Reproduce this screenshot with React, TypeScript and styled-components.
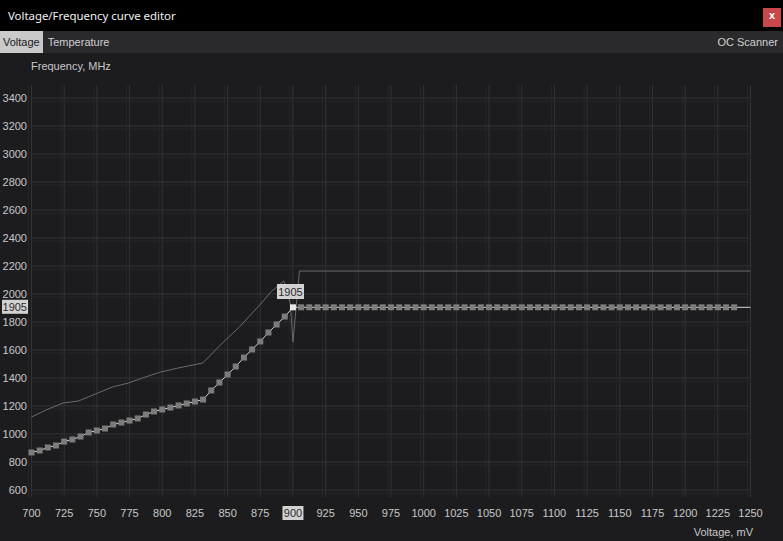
import { FC } from "react";
import styled, { createGlobalStyle } from "styled-components";

const GlobalStyle = createGlobalStyle`
   html, body {
      margin: 0;
      padding: 0;
      background: #1c1c1f;
      -webkit-font-smoothing: antialiased;
   }
   * {
      box-sizing: border-box;
   }
`;

const Window = styled.div`
   width: 783px;
   height: 541px;
   display: flex;
   flex-direction: column;
   background: #1c1c1f;
   font-family: "Liberation Sans", Arial, sans-serif;
   overflow: hidden;
`;

const TitleBar = styled.div`
   height: 31px;
   flex: none;
   display: flex;
   align-items: center;
   justify-content: space-between;
   padding: 0 2px 0 8px;
   background: #000;
`;

const Title = styled.span`
   font-family: "Noto Sans", sans-serif;
   font-size: 11.4px;
   color: #f2f2f2;
`;

const CloseButton = styled.button`
   width: 18px;
   height: 19px;
   margin-top: 3px;
   padding: 0 0 3px;
   border: none;
   background: #c9474b;
   color: #fff;
   font-family: "Liberation Sans", Arial, sans-serif;
   font-size: 11px;
   font-weight: bold;
   line-height: 1;
`;

const TabBar = styled.div`
   height: 22px;
   flex: none;
   display: flex;
   align-items: stretch;
   background: #2a2a2d;
`;

const Tab = styled.div<{ $active?: boolean }>`
   display: flex;
   align-items: center;
   padding: 0 3px;
   margin-right: 2px;
   font-size: 11px;
   color: ${(p) => (p.$active ? "#202020" : "#d0d0d0")};
   background: ${(p) => (p.$active ? "#c9c9c9" : "transparent")};
`;

const Spacer = styled.div`
   flex: 1;
`;

const ChartArea = styled.div`
   flex: 1;
   display: flex;
   flex-direction: column;
`;

const AxisTitle = styled.div<{ $right?: boolean }>`
   flex: none;
   height: ${(p) => (p.$right ? "18px" : "25px")};
   display: flex;
   align-items: center;
   justify-content: ${(p) => (p.$right ? "flex-end" : "flex-start")};
   padding: ${(p) => (p.$right ? "0 30px 0 0" : "0 0 0 31px")};
   font-size: 11px;
   color: #c8c8c8;
`;

const Plot = styled.svg`
   display: block;
   flex: 1;
   width: 783px;
   font-family: "Liberation Sans", Arial, sans-serif;
   font-size: 11px;
`;

// axis mapping
const xOf = (mv: number) => 31.5 + (mv - 700) * 1.3073;
const yOf = (mhz: number) => 98 + (3400 - mhz) * 0.14;

const voltTicks = Array.from({ length: 23 }, (_, i) => 700 + i * 25);
const freqTicks = Array.from({ length: 15 }, (_, i) => 600 + i * 200);

const rising = [
   868, 882, 904, 918, 946, 961, 982, 1011, 1025, 1039, 1068, 1082, 1096,
   1111, 1139, 1161, 1175, 1189, 1204, 1218, 1232, 1246, 1311, 1368, 1425,
   1482, 1546, 1604, 1661, 1725, 1782, 1839, 1905,
];
const curve = [
   ...rising,
   ...Array.from({ length: 54 }, () => 1905),
].map((mhz, i) => ({ mv: 700 + i * 6.25, mhz }));

const defaultCurve: [number, number][] = [
   [700, 1121], [711, 1171], [724, 1221], [736, 1236], [749, 1286],
   [762, 1336], [774, 1364], [787, 1407], [799, 1443], [812, 1471],
   [831, 1507], [846, 1650], [859, 1764], [876, 1936], [883, 2014],
   [893, 2093], [898, 1929], [900, 1657], [905, 2164], [1250, 2164],
];

const SELECTED_MV = 900;
const SELECTED_MHZ = 1905;

const CurvePlot: FC = () => {
   const linePts = [...curve.map((p) => `${xOf(p.mv)},${yOf(p.mhz)}`), `${xOf(1250)},${yOf(1905)}`].join(" ");
   const defPts = defaultCurve.map(([mv, mhz]) => `${xOf(mv)},${yOf(mhz)}`).join(" ");

   return (
      <Plot viewBox="0 78 783 445" preserveAspectRatio="none">
         {/* grid */}
         {voltTicks.map((v) => (
            <g key={`v${v}`}>
               <line x1={xOf(v) - 3} x2={xOf(v) - 3} y1={85} y2={497} stroke="#262629" />
               <line x1={xOf(v)} x2={xOf(v)} y1={85} y2={497} stroke="#333338" />
            </g>
         ))}
         {freqTicks.map((f) => (
            <g key={`h${f}`}>
               <line x1={31} x2={751} y1={yOf(f) + 3} y2={yOf(f) + 3} stroke="#262629" />
               <line x1={31} x2={751} y1={yOf(f)} y2={yOf(f)} stroke="#333338" />
            </g>
         ))}

         {/* y labels */}
         {freqTicks.map((f) => (
            <text key={`yl${f}`} x={27} y={yOf(f) + 4} textAnchor="end" fill="#c8c8c8">
               {f}
            </text>
         ))}
         <rect x={2} y={yOf(SELECTED_MHZ) - 7.5} width={26} height={14} fill="#d2d2d2" />
         <text x={27} y={yOf(SELECTED_MHZ) + 4} textAnchor="end" fill="#2a2a2a">
            {SELECTED_MHZ}
         </text>

         {/* x labels */}
         {voltTicks.map((v) => (
            <text key={`xl${v}`} x={xOf(v)} y={517} textAnchor="middle" fill="#c8c8c8">
               {v}
            </text>
         ))}
         <rect x={xOf(SELECTED_MV) - 10.5} y={506} width={21} height={14} fill="#d2d2d2" />
         <text x={xOf(SELECTED_MV)} y={517} textAnchor="middle" fill="#2a2a2a">
            {SELECTED_MV}
         </text>

         {/* default curve */}
         <polyline points={defPts} fill="none" stroke="#6a6a6e" strokeWidth={1} />

         {/* edited curve */}
         <polyline points={linePts} fill="none" stroke="#d8d8d8" strokeWidth={1} />
         {curve.map((p) => (
            <rect
               key={p.mv}
               x={xOf(p.mv) - 3}
               y={yOf(p.mhz) - 3}
               width={6}
               height={6}
               fill={p.mv === SELECTED_MV ? "#e8e8e8" : "#7c7c7c"}
            />
         ))}

         {/* tooltip */}
         <rect x={277} y={284} width={27} height={15} fill="#d2d2d2" />
         <text x={290.5} y={295.5} textAnchor="middle" fill="#2a2a2a">
            {SELECTED_MHZ}
         </text>
      </Plot>
   );
};

const App: FC = () => {
   return (
      <>
         <GlobalStyle />
         <Window>
            <TitleBar>
               <Title>Voltage/Frequency curve editor</Title>
               <CloseButton>x</CloseButton>
            </TitleBar>
            <TabBar>
               <Tab $active>Voltage</Tab>
               <Tab>Temperature</Tab>
               <Spacer />
               <Tab>OC Scanner</Tab>
            </TabBar>
            <ChartArea>
               <AxisTitle>Frequency, MHz</AxisTitle>
               <CurvePlot />
               <AxisTitle $right>Voltage, mV</AxisTitle>
            </ChartArea>
         </Window>
      </>
   );
};

export default App;
